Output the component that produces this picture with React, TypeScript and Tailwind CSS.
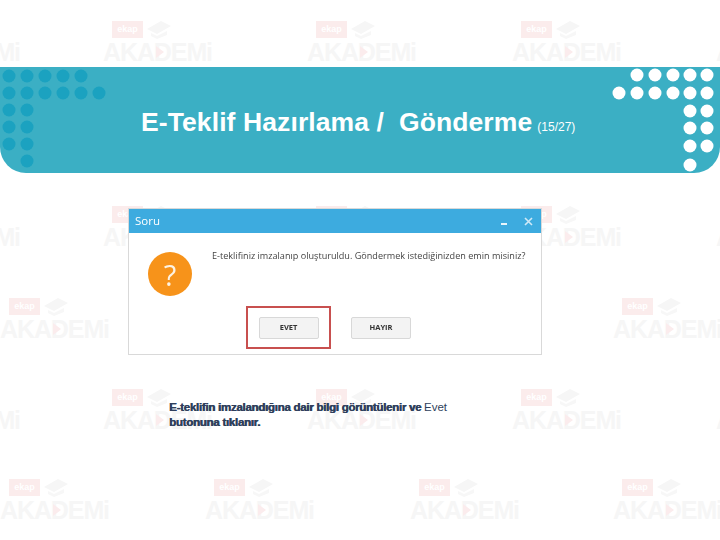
import React from 'react';

const marks = [
  [103, 20], [307, 20], [512, 20], [716, 20], [-89, 20],
  [103, 205], [307, 205], [512, 205], [716, 205], [-89, 205],
  [0, 297], [205, 297], [410, 297], [613, 297],
  [103, 388], [307, 388], [512, 388], [716, 388], [-89, 388],
  [0, 478], [205, 478], [410, 478], [613, 478],
];

// faint logo repeated behind the slide
function Watermark({ x, y }: { x: number; y: number }) {
  return (
    <div className="absolute w-[108px] h-[42px]" style={{ left: x, top: y }}>
      <div className="absolute left-[9px] top-[1px] w-[31px] h-[17px] bg-[#fbecec] text-[9px] leading-[17px] font-bold text-white text-center">ekap</div>
      <svg className="absolute left-[43px] top-0" width="26" height="20" viewBox="0 0 26 20">
        <path d="M1 9 L15 1 L25 6 L11 14 Z" fill="#f6f6f6" />
        <path d="M5 13 L11 16 L21 11 L21 15 L11 19 L5 16 Z" fill="#f7f7f7" />
      </svg>
      <div className="absolute left-0 top-[20px] text-[25px] leading-[24px] font-bold text-[#f6f6f6] whitespace-nowrap font-['Liberation_Sans',sans-serif] tracking-[-1.1px]">AKADEMi</div>
      <svg className="absolute left-[52px] top-[25px]" width="10" height="14" viewBox="0 0 10 14">
        <path d="M1 1 L9 7 L1 13 Z" fill="#fbeced" />
      </svg>
    </div>
  );
}

const leftDots = [
  [9, 9], [27, 9], [45, 9], [63, 9], [81, 9],
  [9, 26], [27, 26], [45, 26], [63, 26], [81, 26], [99, 26],
  [9, 43], [27, 43], [9, 60], [27, 60], [9, 77], [27, 77], [27, 94],
];

const rightDots = [
  [637, 8], [655, 8], [673, 8], [690, 8], [707, 8],
  [619, 26], [637, 26], [655, 26], [673, 26], [690, 26], [707, 26],
  [690, 44], [707, 44], [690, 61], [707, 61], [690, 79], [707, 79], [690, 98],
];

function Question() {
  return (
    <div className="w-[44px] h-[44px] rounded-full bg-[#f7931a] flex items-center justify-center text-[#fdf3e4] text-[29px] leading-none font-normal font-['Open_Sans',sans-serif]">?</div>
  );
}

export default function App() {
  return (
    <div className="relative w-[720px] h-[540px] overflow-hidden bg-white pt-[67px] font-['Liberation_Sans',sans-serif]">
      {marks.map(([x, y]) => <Watermark key={`${x}-${y}`} x={x} y={y} />)}

      <div className="relative h-[106px] bg-[#3bafc4] rounded-b-[26px] pl-[141px] pt-[40px] flex items-baseline text-white whitespace-nowrap">
        <svg className="absolute left-0 top-0" width="720" height="106" viewBox="0 0 720 106">
          {leftDots.map(([x, y]) => <circle key={`${x}-${y}`} cx={x} cy={y} r="6.5" fill="#1ba2c0" />)}
          {rightDots.map(([x, y]) => <circle key={`${x}-${y}`} cx={x} cy={y} r="6.5" fill="#fff" />)}
        </svg>
        <span className="relative text-[26.5px] leading-[30px] font-bold tracking-[0.1px] whitespace-pre">E-Teklif Hazırlama /  Gönderme</span>
        <span className="relative ml-[5px] text-[12px]">(15/27)</span>
      </div>

      <div className="relative ml-[128px] mt-[35px] w-[414px] h-[147px] border border-[#d9d9d9] bg-white font-['Open_Sans',sans-serif] blur-[0.3px]">
        <div className="flex items-center justify-between h-[24px] bg-[#3dabdf] pl-[6px] pr-[8px] text-white">
          <span className="text-[11.5px]">Soru</span>
          <div className="flex items-center gap-[17px]">
            <span className="w-[6px] h-[2px] mt-[6px] bg-[#e8f5fb]" />
            <svg width="9" height="9" viewBox="0 0 9 9"><path d="M1 1 L8 8 M8 1 L1 8" stroke="#cfe9f7" strokeWidth="1.6" /></svg>
          </div>
        </div>
        <div className="flex pl-[19px] pt-[19px]">
          <Question />
          <p className="ml-[20px] mt-[-2px] text-[9.1px] leading-[12px] text-[#444] whitespace-nowrap">E-teklifiniz imzalanıp oluşturuldu. Göndermek istediğinizden emin misiniz?</p>
        </div>
        <div className="flex items-center ml-[117px] mt-[10px]">
          <div className="w-[85px] h-[43px] border-2 border-[#c8504f] flex items-center justify-center">
            <button className="w-[60px] h-[22px] rounded-[2px] border border-[#d8d8d8] bg-[#f3f3f3] text-[7.5px] font-bold text-[#333]">EVET</button>
          </div>
          <button className="ml-[20px] w-[60px] h-[22px] rounded-[2px] border border-[#d8d8d8] bg-[#f3f3f3] text-[7.5px] font-bold text-[#333]">HAYIR</button>
        </div>
      </div>

      <p className="relative ml-[169px] mt-[45px] w-[285px] text-[11.5px] leading-[15px] font-bold tracking-[-0.27px] text-[#2f3f5c] [text-shadow:0.6px_0_0_#2f3f5c]">
        E-teklifin imzalandığına dair bilgi görüntülenir ve <span className="font-normal tracking-normal [text-shadow:none]">Evet</span> butonuna tıklanır.
      </p>
    </div>
  );
}
